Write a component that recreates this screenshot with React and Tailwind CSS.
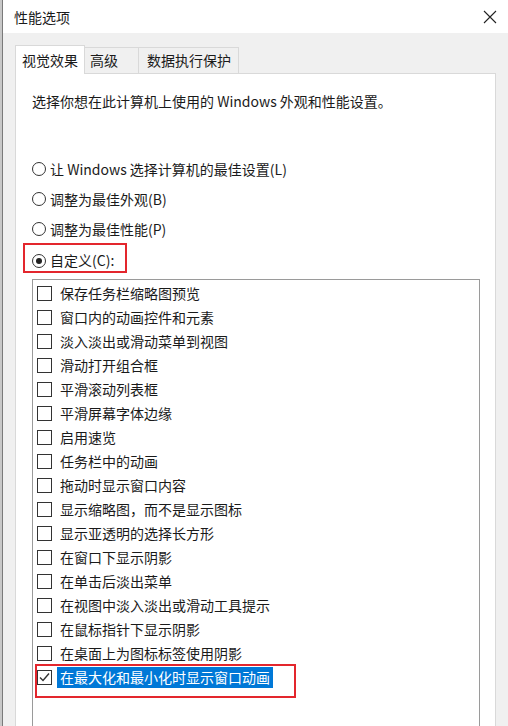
const font = { fontFamily: '"Noto Sans CJK SC", "Noto Sans", sans-serif' }

const radios = [
  { label: "让 Windows 选择计算机的最佳设置(L)", checked: false },
  { label: "调整为最佳外观(B)", checked: false },
  { label: "调整为最佳性能(P)", checked: false },
]

const options = [
  "保存任务栏缩略图预览",
  "窗口内的动画控件和元素",
  "淡入淡出或滑动菜单到视图",
  "滑动打开组合框",
  "平滑滚动列表框",
  "平滑屏幕字体边缘",
  "启用速览",
  "任务栏中的动画",
  "拖动时显示窗口内容",
  "显示缩略图，而不是显示图标",
  "显示亚透明的选择长方形",
  "在窗口下显示阴影",
  "在单击后淡出菜单",
  "在视图中淡入淡出或滑动工具提示",
  "在鼠标指针下显示阴影",
  "在桌面上为图标标签使用阴影",
]

const Radio = ({ checked }) => (
  <span className="w-[14px] h-[14px] rounded-full border border-[#333] bg-white flex items-center justify-center shrink-0">
    {checked && <span className="w-[6px] h-[6px] rounded-full bg-[#222]" />}
  </span>
)

const Checkbox = ({ checked }) => (
  <span className="w-[15px] h-[15px] border border-[#333] bg-white flex items-center justify-center shrink-0">
    {checked && (
      <svg width="13" height="13" viewBox="0 0 13 13">
        <path d="M2 6.5 L5 9.5 L11 2.5" fill="none" stroke="#333" strokeWidth="1.4" />
      </svg>
    )}
  </span>
)

const App = () => {
  return (
    <div className="w-[508px] h-[726px] overflow-hidden flex bg-[#f0f0f0] text-[14px] text-[#1a1a1a]" style={font}>
      <div className="w-[2px] shrink-0 bg-[#c8c8c8]" />
      <div className="w-[1px] shrink-0 bg-[#7a7a7a]" />

      <div className="flex-1 flex flex-col">
        {/* title bar */}
        <div className="h-[33px] shrink-0 bg-white flex items-center justify-between pl-[11px] pr-[11px]">
          <span className="text-[14px] leading-none">性能选项</span>
          <svg width="14" height="14" viewBox="0 0 14 14">
            <path d="M1 1 L13 13 M13 1 L1 13" stroke="#222" strokeWidth="1.1" fill="none" />
          </svg>
        </div>

        {/* tabs */}
        <div className="flex items-end shrink-0 pl-[12px] pt-[12px] h-[40px]">
          <div className="relative z-10 h-[29px] -mb-[1px] px-[6px] bg-white border border-b-0 border-[#d9d9d9] flex items-center">
            视觉效果
          </div>
          <div className="h-[26px] w-[54px] border border-l-0 border-b-0 border-[#d9d9d9] flex items-center pl-[5px]">
            高级
          </div>
          <div className="h-[26px] w-[100px] border border-l-0 border-b-0 border-[#d9d9d9] flex items-center pl-[8px]">
            数据执行保护
          </div>
        </div>

        {/* panel */}
        <div className="shrink-0 ml-[12px] mr-[12px] bg-white border border-[#d9d9d9] pl-[16px] pr-[15px] pt-[17px]">
          <p className="leading-[20px]">选择你想在此计算机上使用的 Windows 外观和性能设置。</p>

          <div className="mt-[43px] flex flex-col">
            {radios.map((r, i) => (
              <div key={i} className="h-[30px] flex items-center gap-[4px]">
                <Radio checked={r.checked} />
                <span>{r.label}</span>
              </div>
            ))}
            <div className="relative h-[30px] flex items-center gap-[4px] pt-[3px]">
              <Radio checked />
              <span>自定义(C):</span>
              <span className="absolute left-[-9px] top-[-1px] w-[104px] h-[30px] border-2 border-[#e3262d]" />
            </div>
          </div>

          <div className="mt-[5px] h-[460px] border border-[#9a9a9a] pt-[1px] pl-[4px]">
            {options.map((o, i) => (
              <div key={i} className="h-[24px] flex items-center gap-[8px]">
                <Checkbox />
                <span>{o}</span>
              </div>
            ))}
            <div className="relative h-[24px] flex items-center gap-[5px]">
              <Checkbox checked />
              <span className="bg-[#0078d7] text-white px-[3px] leading-[21px]">在最大化和最小化时显示窗口动画</span>
              <span className="absolute left-[-2px] top-[-1px] w-[261px] h-[34px] border-[2.5px] border-[#e3262d]" />
            </div>
          </div>
        </div>
      </div>
    </div>
  )
}

export default App
